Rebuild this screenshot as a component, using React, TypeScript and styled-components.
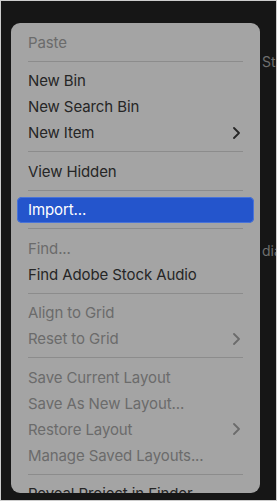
import React from "react";
import styled, { createGlobalStyle } from "styled-components";

const Global = createGlobalStyle`
  html, body { margin: 0; padding: 0; background: #151515; }
  * { box-sizing: border-box; }
`;

const Frame = styled.div`
  position: relative;
  width: 277px;
  height: 501px;
  border: 1px solid #cdcdcd;
  background: #161616;
  padding: 22px 16px 7px 10px;
  display: flex;
  flex-direction: column;
  overflow: hidden;
  font-family: "Inter", "Liberation Sans", sans-serif;
`;

const BackText = styled.span<{ $top: number }>`
  position: absolute;
  right: -2px;
  top: ${(p) => p.$top}px;
  font-size: 14px;
  color: #6f6f6f;
  width: 16px;
  overflow: hidden;
  white-space: nowrap;
`;

const Menu = styled.div`
  flex: 1;
  min-height: 0;
  background: #a4a4a4;
  border-radius: 9px;
  padding: 6px 6px;
  display: flex;
  flex-direction: column;
  overflow: hidden;
`;

const Item = styled.div<{ $disabled?: boolean; $active?: boolean }>`
  flex: none;
  height: 26px;
  display: flex;
  align-items: center;
  justify-content: space-between;
  padding: 0 14px 0 11px;
  border-radius: 5px;
  font-size: 15px;
  letter-spacing: -0.1px;
  color: ${(p) => (p.$active ? "#ffffff" : p.$disabled ? "#6b6b6b" : "#262626")};
  background: ${(p) => (p.$active ? "#2455cc" : "transparent")};
  box-shadow: ${(p) => (p.$active ? "inset 0 0 0 1px #4a74d8" : "none")};
  white-space: nowrap;
`;

const Separator = styled.div`
  flex: none;
  height: 12.5px;
  display: flex;
  align-items: center;
  padding: 0 11px;
  &::after {
    content: "";
    flex: 1;
    height: 1px;
    background: #8c8c8c;
  }
`;

const Chevron = ({ color }: { color: string }) => (
  <svg width="7" height="12" viewBox="0 0 7 12" fill="none">
    <path d="M1 1l5 5-5 5" stroke={color} strokeWidth="1.8" strokeLinecap="round" strokeLinejoin="round" />
  </svg>
);

type Entry =
  | { sep: true }
  | { label: string; disabled?: boolean; active?: boolean; sub?: boolean };

const entries: Entry[] = [
  { label: "Paste", disabled: true },
  { sep: true },
  { label: "New Bin" },
  { label: "New Search Bin" },
  { label: "New Item", sub: true },
  { sep: true },
  { label: "View Hidden" },
  { sep: true },
  { label: "Import...", active: true },
  { sep: true },
  { label: "Find...", disabled: true },
  { label: "Find Adobe Stock Audio" },
  { sep: true },
  { label: "Align to Grid", disabled: true },
  { label: "Reset to Grid", disabled: true, sub: true },
  { sep: true },
  { label: "Save Current Layout", disabled: true },
  { label: "Save As New Layout...", disabled: true },
  { label: "Restore Layout", disabled: true, sub: true },
  { label: "Manage Saved Layouts...", disabled: true },
  { sep: true },
  { label: "Reveal Project in Finder..." },
];

export default function App() {
  return (
    <>
      <Global />
      <Frame>
        <BackText $top={52}>Sta</BackText>
        <BackText $top={241}>dia</BackText>
        <Menu>
          {entries.map((e, i) =>
            "sep" in e ? (
              <Separator key={i} />
            ) : (
              <Item key={i} $disabled={e.disabled} $active={e.active}>
                <span>{e.label}</span>
                {e.sub && <Chevron color={e.disabled ? "#6b6b6b" : "#262626"} />}
              </Item>
            )
          )}
        </Menu>
      </Frame>
    </>
  );
}
